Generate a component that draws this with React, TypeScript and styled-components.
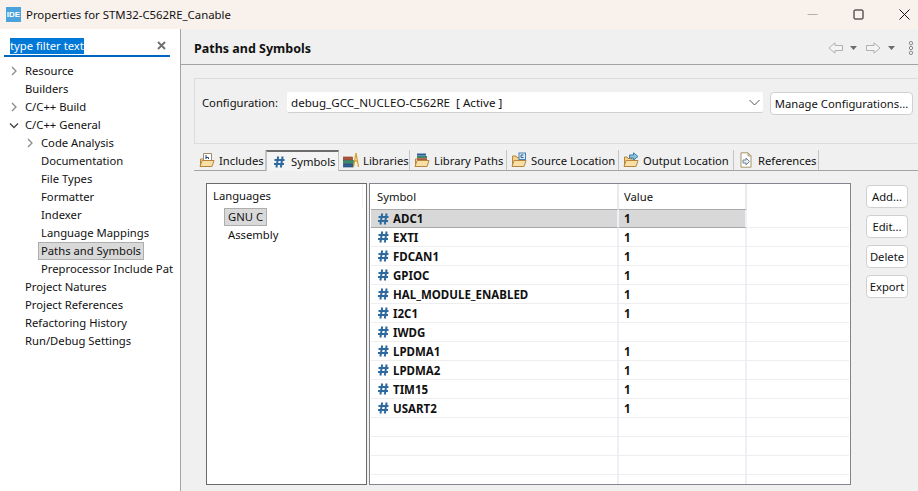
import { FC, ReactNode } from 'react'
import styled, { createGlobalStyle } from 'styled-components'

const GlobalStyle = createGlobalStyle`
  html, body {
    margin: 0;
    padding: 0;
    background: #f0f0f0;
  }
  body {
    font-family: "Noto Sans", "Open Sans", sans-serif;
    font-size: 11.25px;
    color: #111;
  }
  * {
    box-sizing: border-box;
  }
`

const Window = styled.div`
  width: 918px;
  height: 491px;
  overflow: hidden;
  display: flex;
  flex-direction: column;
`

const TitleBar = styled.div`
  height: 29px;
  flex: none;
  display: flex;
  align-items: center;
  padding-left: 6px;
  background: #f9f1ec;
`

const Logo = styled.div`
  width: 15px;
  height: 15px;
  margin-right: 5px;
  background: #4aa3dc;
  color: #fff;
  font-family: "Liberation Sans", sans-serif;
  font-size: 8px;
  font-weight: 700;
  line-height: 15px;
  text-align: center;
`

const Title = styled.div`
  flex: 1;
  min-width: 0;
  font-size: 11.4px;
`

const WinButtons = styled.div`
  display: flex;
  margin-right: -9px;
`

const WinButton = styled.div`
  width: 46px;
  height: 29px;
  display: flex;
  align-items: center;
  justify-content: center;
`

const Body = styled.div`
  flex: 1;
  display: flex;
  min-height: 0;
`

const Sidebar = styled.div`
  width: 181px;
  flex: none;
  padding-top: 8px;
  background: #fff;
  border-right: 1px solid #a3a3a3;
  overflow: hidden;
`

const Search = styled.div`
  width: 166px;
  height: 20px;
  margin: 0 0 5px 4px;
  padding-left: 6px;
  display: flex;
  align-items: center;
  justify-content: space-between;
  border-bottom: 2px solid #0067c0;
`

const SearchText = styled.span`
  background: #0078d7;
  color: #fff;
  line-height: 16px;
`

const TreeRow = styled.div<{ $depth: number }>`
  height: 18px;
  display: flex;
  align-items: center;
  position: relative;
  padding-left: ${p => (p.$depth === 0 ? 25 : 41)}px;
  white-space: nowrap;
`

const TreeChevron = styled.span<{ $depth: number }>`
  position: absolute;
  left: ${p => (p.$depth === 0 ? 8 : 24)}px;
  top: 3px;
  width: 12px;
  height: 12px;
  display: flex;
`

const TreeLabel = styled.span<{ $selected?: boolean }>`
  display: block;
  margin-left: ${p => (p.$selected ? -3 : 0)}px;
  padding: 0 ${p => (p.$selected ? 2 : 0)}px;
  line-height: ${p => (p.$selected ? 16 : 18)}px;
  background: ${p => (p.$selected ? '#d9d9d9' : 'transparent')};
  border: ${p => (p.$selected ? '1px solid #adadad' : 'none')};
`

const Main = styled.div`
  flex: 1;
  min-width: 0;
  display: flex;
  flex-direction: column;
  background: #f0f0f0;
`

const Header = styled.div`
  height: 36px;
  flex: none;
  display: flex;
  align-items: center;
  padding: 3px 4px 0 13px;
  border-bottom: 1px solid #a3a3a3;
`

const Heading = styled.div`
  flex: 1;
  font-size: 12.5px;
  font-weight: 700;
`

const HeaderTool = styled.span<{ $gap?: number }>`
  display: flex;
  margin-left: ${p => p.$gap ?? 0}px;
`

const ConfigGroup = styled.div`
  height: 66px;
  flex: none;
  margin: 13px 0 0 13px;
  padding: 13px 5px 0 7px;
  display: flex;
  align-items: flex-start;
  border: 1px solid #dcdcdc;
  border-right: none;
`

const ConfigLabel = styled.div`
  width: 85px;
  line-height: 22px;
`

const Combo = styled.div`
  width: 476px;
  height: 21px;
  padding: 0 3px 0 4px;
  display: flex;
  align-items: center;
  justify-content: space-between;
  background: #fff;
  border-bottom: 1px solid #d0d0d0;
  border-radius: 2px;
  font-size: 11.6px;
  white-space: pre;
`

const Button = styled.div<{ $width: number }>`
  width: ${p => p.$width}px;
  height: 23px;
  flex: none;
  display: flex;
  align-items: center;
  justify-content: center;
  background: #fff;
  border: 1px solid #d0d0d0;
  border-radius: 4px;
  white-space: nowrap;
`

const ManageButton = styled(Button)`
  margin-left: 7px;
`

const TabBar = styled.div`
  height: 21px;
  flex: none;
  margin: 6px 0 0 13px;
  padding-left: 1px;
  display: flex;
  border-bottom: 1px solid #a3a3a3;
`

const Tab = styled.div<{ $width: number; $active?: boolean }>`
  width: ${p => p.$width}px;
  height: ${p => (p.$active ? 21 : 20)}px;
  flex: none;
  display: flex;
  align-items: center;
  gap: 4px;
  padding-left: 4px;
  white-space: nowrap;
  border-right: 1px solid #c4c4c4;
  background: ${p => (p.$active ? '#f4f4f4' : 'transparent')};
  border-top: ${p => (p.$active ? '2px solid #6d6d6d' : 'none')};
  border-left: ${p => (p.$active ? '1px solid #c4c4c4' : 'none')};
`

const TabIcon = styled.span`
  width: 16px;
  height: 16px;
  flex: none;
  display: flex;
  align-items: center;
  justify-content: center;
`

const Content = styled.div`
  flex: 1;
  min-height: 0;
  padding: 12px 0 6px 25px;
  display: flex;
`

const LanguagesBox = styled.div`
  width: 161px;
  flex: none;
  margin-right: 2px;
  padding: 0 3px 0 6px;
  background: #fff;
  border: 1px solid #6b6b6b;
`

const LanguagesTitle = styled.div`
  height: 24px;
  line-height: 24px;
  border-right: 1px solid #f0f0f0;
`

const LanguageItem = styled.div<{ $selected?: boolean }>`
  width: max-content;
  height: 18px;
  line-height: 16px;
  margin-left: 11px;
  padding: 0 3px;
  background: ${p => (p.$selected ? '#d9d9d9' : 'transparent')};
  border: 1px solid ${p => (p.$selected ? '#adadad' : 'transparent')};
`

const SymbolTable = styled.div`
  width: 482px;
  flex: none;
  padding: 0 1px 0 1px;
  background: #fff;
  border: 1px solid #84848c;
  overflow: hidden;
`

const TableHead = styled.div`
  height: 25px;
  display: grid;
  grid-template-columns: 248px 128px 1fr;
`

const HeadCell = styled.div<{ $line?: boolean; $pad: number }>`
  padding: 2px 0 0 ${p => p.$pad}px;
  line-height: 22px;
  border-right: ${p => (p.$line ? '2px solid #e8eaee' : 'none')};
`

const Row = styled.div`
  height: 19px;
  display: grid;
  grid-template-columns: 248px 128px 1fr;
  border-bottom: 1px solid #eeeeee;
`

const Cell = styled.div<{ $line?: boolean; $selected?: boolean; $pad: number }>`
  display: flex;
  align-items: center;
  gap: 4px;
  padding-left: ${p => p.$pad}px;
  font-weight: 700;
  font-size: 11.5px;
  background: ${p => (p.$selected ? '#d8d8d8' : 'transparent')};
  border-right: ${p => (p.$line ? '2px solid #edf0f8' : 'none')};
`

const SelectedCell = styled(Cell)`
  border-top: 1px solid #a8a8a8;
  border-bottom: 1px solid #a8a8a8;
  margin-bottom: -1px;
`

const ButtonColumn = styled.div`
  margin-left: 15px;
  padding-top: 2px;
  display: flex;
  flex-direction: column;
  gap: 7px;
`

const HashIcon = () => (
  <svg width="11" height="12" viewBox="0 0 11 12" fill="none" stroke="#2f6a9f" strokeWidth="2">
    <path d="M4.2 0.5 L2.4 11.5 M8.6 0.5 L6.8 11.5 M0.5 4 H10.5 M0 8 H10" />
  </svg>
)

const ChevronRight = () => (
  <svg width="12" height="12" viewBox="0 0 12 12" fill="none" stroke="#8a8a8a" strokeWidth="1.3">
    <path d="M4 2 L8 6 L4 10" />
  </svg>
)

const ChevronDown = () => (
  <svg width="12" height="12" viewBox="0 0 12 12" fill="none" stroke="#444" strokeWidth="1.3">
    <path d="M2 4.5 L6 8.5 L10 4.5" />
  </svg>
)

const FolderBase = ({ children }: { children?: ReactNode }) => (
  <svg width="16" height="16" viewBox="0 0 16 16" fill="none">
    {children}
    <path d="M1 14.5 L3 8.5 H15 L13 14.5 Z" fill="#f8dfa6" stroke="#b8843c" />
  </svg>
)

const IncludesIcon = () => (
  <FolderBase>
    <path d="M4.5 9 V1.5 H12.5 V9" fill="#fff" stroke="#a08a68" />
    <path d="M7 3 V7 M7 5.5 H9.5 V7" stroke="#1f3f7a" />
    <path d="M1.5 14 V7 H4" stroke="#b8843c" />
  </FolderBase>
)

const LibrariesIcon = () => (
  <svg width="16" height="16" viewBox="0 0 16 16" fill="none">
    <rect x="0.5" y="5" width="9" height="3" fill="#b0563c" stroke="#7a3a28" strokeWidth="0.6" />
    <rect x="0.5" y="8.5" width="10" height="3" fill="#3a8a6a" stroke="#22604a" strokeWidth="0.6" />
    <rect x="0.5" y="12" width="10" height="3" fill="#2f5f9a" stroke="#1f3f6a" strokeWidth="0.6" />
    <path d="M13 1 L10.5 15 M13 1 L15.5 15 M11.5 9 H14.5" stroke="#d8a030" strokeWidth="1.3" />
  </svg>
)

const LibraryPathsIcon = () => (
  <FolderBase>
    <rect x="3" y="1.5" width="9" height="2.2" fill="#2f5f9a" />
    <rect x="3" y="4" width="10" height="2.2" fill="#3a8a6a" />
    <rect x="3" y="6.2" width="10" height="2.2" fill="#b0563c" />
    <path d="M1.5 14 V7 H3" stroke="#b8843c" />
  </FolderBase>
)

const SourceIcon = () => (
  <FolderBase>
    <path d="M1.5 14 V4 H5 L6 5.5 H13 V8.5" fill="#f3d48c" stroke="#b8843c" />
    <rect x="8" y="1" width="6.5" height="6.5" fill="#dcecf8" stroke="#4a7fb0" />
    <path d="M12.5 3 H10 V5.5 H12.5" stroke="#2f5f9a" />
  </FolderBase>
)

const OutputIcon = () => (
  <FolderBase>
    <path d="M1.5 14 V5 H4 L5 6.5 H9 V8.5" fill="#f3d48c" stroke="#b8843c" />
    <path d="M6.5 3 H10.5 V0.8 L15 4.5 L10.5 8.2 V6 H6.5 Z" fill="#8fc0dc" stroke="#3f7fa8" />
  </FolderBase>
)

const ReferencesIcon = () => (
  <svg width="16" height="16" viewBox="0 0 16 16" fill="none">
    <path d="M3 0.8 H10 L13 3.8 V15.2 H3 Z" fill="#fff" stroke="#a89468" />
    <path d="M10 0.8 V3.8 H13" stroke="#a89468" />
    <path d="M5 8 H8 V6 L11.5 9.5 L8 13 V11 H5 Z" fill="#e8eef4" stroke="#6f8296" />
  </svg>
)

const NavArrow = ({ flip }: { flip?: boolean }) => (
  <svg width="15" height="12" viewBox="0 0 15 12" fill="#f4f4f4" stroke="#b0b0b0">
    <path
      d={flip ? 'M0.5 3.5 H8 V0.8 L14 6 L8 11.2 V8.5 H0.5 Z' : 'M14.5 3.5 H7 V0.8 L1 6 L7 11.2 V8.5 H14.5 Z'}
    />
  </svg>
)

const DropMark = () => (
  <svg width="7" height="4" viewBox="0 0 7 4" fill="#6b6b6b">
    <path d="M0 0 H7 L3.5 4 Z" />
  </svg>
)

const DotsIcon = () => (
  <svg width="6" height="14" viewBox="0 0 6 14" fill="none" stroke="#8a8a8a">
    <circle cx="3" cy="2.2" r="1.7" />
    <circle cx="3" cy="7" r="1.7" />
    <circle cx="3" cy="11.8" r="1.7" />
  </svg>
)

const treeItems = [
  { label: 'Resource', depth: 0, chevron: 'right' },
  { label: 'Builders', depth: 0 },
  { label: 'C/C++ Build', depth: 0, chevron: 'right' },
  { label: 'C/C++ General', depth: 0, chevron: 'down' },
  { label: 'Code Analysis', depth: 1, chevron: 'right' },
  { label: 'Documentation', depth: 1 },
  { label: 'File Types', depth: 1 },
  { label: 'Formatter', depth: 1 },
  { label: 'Indexer', depth: 1 },
  { label: 'Language Mappings', depth: 1 },
  { label: 'Paths and Symbols', depth: 1, selected: true },
  { label: 'Preprocessor Include Pat', depth: 1 },
  { label: 'Project Natures', depth: 0 },
  { label: 'Project References', depth: 0 },
  { label: 'Refactoring History', depth: 0 },
  { label: 'Run/Debug Settings', depth: 0 },
]

const tabs = [
  { label: 'Includes', width: 71, icon: <IncludesIcon /> },
  { label: 'Symbols', width: 73, active: true, icon: <HashIcon /> },
  { label: 'Libraries', width: 71, icon: <LibrariesIcon /> },
  { label: 'Library Paths', width: 97, icon: <LibraryPathsIcon /> },
  { label: 'Source Location', width: 112, icon: <SourceIcon /> },
  { label: 'Output Location', width: 115, icon: <OutputIcon /> },
  { label: 'References', width: 85, icon: <ReferencesIcon /> },
]

const symbols = [
  { name: 'ADC1', value: '1' },
  { name: 'EXTI', value: '1' },
  { name: 'FDCAN1', value: '1' },
  { name: 'GPIOC', value: '1' },
  { name: 'HAL_MODULE_ENABLED', value: '1' },
  { name: 'I2C1', value: '1' },
  { name: 'IWDG', value: '' },
  { name: 'LPDMA1', value: '1' },
  { name: 'LPDMA2', value: '1' },
  { name: 'TIM15', value: '1' },
  { name: 'USART2', value: '1' },
]

const App: FC = () => (
  <Window>
    <GlobalStyle />
    <TitleBar>
      <Logo>IDE</Logo>
      <Title>Properties for STM32-C562RE_Canable</Title>
      <WinButtons>
        <WinButton>
          <svg width="11" height="11" viewBox="0 0 11 11" stroke="#b5b0ac">
            <path d="M0.5 5.5 H10.5" />
          </svg>
        </WinButton>
        <WinButton>
          <svg width="11" height="11" viewBox="0 0 11 11" fill="none" stroke="#111">
            <rect x="1" y="1" width="9" height="9" rx="1" />
          </svg>
        </WinButton>
        <WinButton>
          <svg width="11" height="11" viewBox="0 0 11 11" stroke="#111">
            <path d="M0.5 0.5 L10.5 10.5 M10.5 0.5 L0.5 10.5" />
          </svg>
        </WinButton>
      </WinButtons>
    </TitleBar>
    <Body>
      <Sidebar>
        <Search>
          <SearchText>type filter text</SearchText>
          <svg width="16" height="16" viewBox="0 0 16 16" stroke="#6e6e6e" strokeWidth="1.8">
            <path d="M4 4 L11 11 M11 4 L4 11" />
          </svg>
        </Search>
        {treeItems.map(item => (
          <TreeRow key={item.label} $depth={item.depth}>
            {item.chevron && (
              <TreeChevron $depth={item.depth}>
                {item.chevron === 'down' ? <ChevronDown /> : <ChevronRight />}
              </TreeChevron>
            )}
            <TreeLabel $selected={item.selected}>{item.label}</TreeLabel>
          </TreeRow>
        ))}
      </Sidebar>
      <Main>
        <Header>
          <Heading>Paths and Symbols</Heading>
          <HeaderTool><NavArrow /></HeaderTool>
          <HeaderTool $gap={7}><DropMark /></HeaderTool>
          <HeaderTool $gap={9}><NavArrow flip /></HeaderTool>
          <HeaderTool $gap={7}><DropMark /></HeaderTool>
          <HeaderTool $gap={13}><DotsIcon /></HeaderTool>
        </Header>
        <ConfigGroup>
          <ConfigLabel>Configuration:</ConfigLabel>
          <Combo>
            <span>debug_GCC_NUCLEO-C562RE  [ Active ]</span>
            <svg width="11" height="7" viewBox="0 0 11 7" fill="none" stroke="#555">
              <path d="M0.5 1 L5.5 6 L10.5 1" />
            </svg>
          </Combo>
          <ManageButton $width={143}>Manage Configurations...</ManageButton>
        </ConfigGroup>
        <TabBar>
          {tabs.map(tab => (
            <Tab key={tab.label} $width={tab.width} $active={tab.active}>
              <TabIcon>{tab.icon}</TabIcon>
              {tab.label}
            </Tab>
          ))}
        </TabBar>
        <Content>
          <LanguagesBox>
            <LanguagesTitle>Languages</LanguagesTitle>
            <LanguageItem $selected>GNU C</LanguageItem>
            <LanguageItem>Assembly</LanguageItem>
          </LanguagesBox>
          <SymbolTable>
            <TableHead>
              <HeadCell $line $pad={6}>Symbol</HeadCell>
              <HeadCell $line $pad={5}>Value</HeadCell>
              <HeadCell $pad={0} />
            </TableHead>
            {symbols.map((symbol, index) => {
              const RowCell = index === 0 ? SelectedCell : Cell
              return (
                <Row key={symbol.name}>
                  <RowCell $line $pad={7} $selected={index === 0}>
                    <HashIcon />
                    {symbol.name}
                  </RowCell>
                  <RowCell $line $pad={5} $selected={index === 0}>{symbol.value}</RowCell>
                  <Cell $pad={0} />
                </Row>
              )
            })}
            {[0, 1, 2, 3].map(i => (
              <Row key={i}>
                <Cell $line $pad={0} />
                <Cell $line $pad={0} />
                <Cell $pad={0} />
              </Row>
            ))}
          </SymbolTable>
          <ButtonColumn>
            <Button $width={42}>Add...</Button>
            <Button $width={42}>Edit...</Button>
            <Button $width={42}>Delete</Button>
            <Button $width={42}>Export</Button>
          </ButtonColumn>
        </Content>
      </Main>
    </Body>
  </Window>
)

export default App
